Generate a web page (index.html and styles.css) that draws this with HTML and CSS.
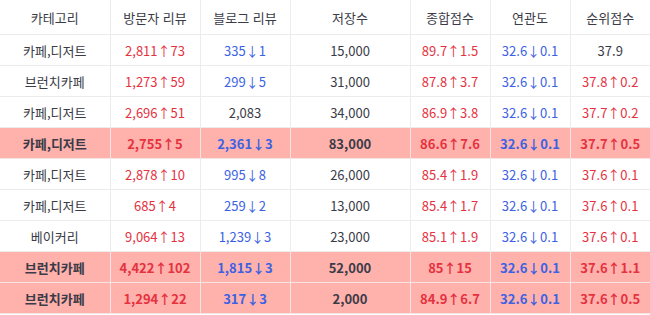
FILE: index.html
```html
<!DOCTYPE html>
<html lang="ko">
<head>
<meta charset="utf-8">
<link rel="stylesheet" href="styles.css">
</head>
<body>
<table class="rank">
  <colgroup>
    <col class="c-cat"><col class="c-n"><col class="c-n"><col class="c-save"><col class="c-s"><col class="c-s"><col class="c-s">
  </colgroup>
  <thead>
    <tr><th>카테고리</th><th>방문자 리뷰</th><th>블로그 리뷰</th><th>저장수</th><th>종합점수</th><th>연관도</th><th>순위점수</th></tr>
  </thead>
  <tbody>
    <tr><td>카페,디저트</td><td class="up">2,811↑73</td><td class="down">335↓1</td><td>15,000</td><td class="up">89.7↑1.5</td><td class="down">32.6↓0.1</td><td>37.9</td></tr>
    <tr><td>브런치카페</td><td class="up">1,273↑59</td><td class="down">299↓5</td><td>31,000</td><td class="up">87.8↑3.7</td><td class="down">32.6↓0.1</td><td class="up">37.8↑0.2</td></tr>
    <tr><td>카페,디저트</td><td class="up">2,696↑51</td><td>2,083</td><td>34,000</td><td class="up">86.9↑3.8</td><td class="down">32.6↓0.1</td><td class="up">37.7↑0.2</td></tr>
    <tr class="hl"><td>카페,디저트</td><td class="up">2,755↑5</td><td class="down">2,361↓3</td><td>83,000</td><td class="up">86.6↑7.6</td><td class="down">32.6↓0.1</td><td class="up">37.7↑0.5</td></tr>
    <tr><td>카페,디저트</td><td class="up">2,878↑10</td><td class="down">995↓8</td><td>26,000</td><td class="up">85.4↑1.9</td><td class="down">32.6↓0.1</td><td class="up">37.6↑0.1</td></tr>
    <tr><td>카페,디저트</td><td class="up">685↑4</td><td class="down">259↓2</td><td>13,000</td><td class="up">85.4↑1.7</td><td class="down">32.6↓0.1</td><td class="up">37.6↑0.1</td></tr>
    <tr><td>베이커리</td><td class="up">9,064↑13</td><td class="down">1,239↓3</td><td>23,000</td><td class="up">85.1↑1.9</td><td class="down">32.6↓0.1</td><td class="up">37.6↑0.1</td></tr>
    <tr class="hl"><td>브런치카페</td><td class="up">4,422↑102</td><td class="down">1,815↓3</td><td>52,000</td><td class="up">85↑15</td><td class="down">32.6↓0.1</td><td class="up">37.6↑1.1</td></tr>
    <tr class="hl"><td>브런치카페</td><td class="up">1,294↑22</td><td class="down">317↓3</td><td>2,000</td><td class="up">84.9↑6.7</td><td class="down">32.6↓0.1</td><td class="up">37.6↑0.5</td></tr>
  </tbody>
</table>
</body>
</html>
```
FILE: styles.css
```css
html, body {
  margin: 0;
  padding: 0;
  background: #ffffff;
}
body {
  font-family: "Noto Sans CJK KR", "Noto Sans", sans-serif;
  font-size: 13px;
  color: #3b3b47;
}
.rank {
  width: 650px;
  border-collapse: collapse;
  table-layout: fixed;
}
.c-cat { width: 110px; }
.c-n { width: 90px; }
.c-save { width: 120px; }
.c-s { width: 80px; }
.rank th,
.rank td {
  text-align: center;
  padding: 0;
  border: 1px solid #ececec;
  white-space: nowrap;
}
.rank th {
  font-weight: 400;
  height: 34px;
  border-top: none;
}
.rank td {
  height: 30px;
}
.rank tr > :first-child { border-left: none; }
.rank tr > :last-child { border-right: none; }
.up { color: #e5323f; }
.down { color: #3b62e3; }
.hl td {
  background: #ffb1ac;
  font-weight: 700;
  border-color: #f4e4e4;
}
```
